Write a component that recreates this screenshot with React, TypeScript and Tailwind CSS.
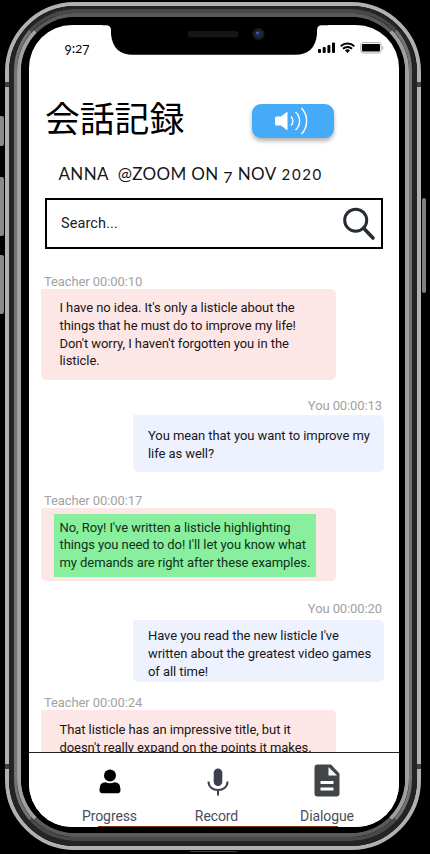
import type { ReactNode } from "react";

type Message = {
  who: "Teacher" | "You";
  time: string;
  lines: string[];
  block: string;
  label: string;
  bubble: string;
  highlight?: boolean;
};

const messages: Message[] = [
  {
    who: "Teacher",
    time: "00:00:10",
    lines: [
      "I have no idea. It's only a listicle about the",
      "things that he must do to improve my life!",
      "Don't worry, I haven't forgotten you in the",
      "listicle.",
    ],
    block: "mt-[25px]",
    label: "h-[15px] leading-[15px]",
    bubble: "h-[91px] pt-[10px]",
  },
  {
    who: "You",
    time: "00:00:13",
    lines: ["You mean that you want to improve my", "life as well?"],
    block: "mt-[18px]",
    label: "h-[17px] leading-[15px]",
    bubble: "h-[57px] pt-[12px]",
  },
  {
    who: "Teacher",
    time: "00:00:17",
    lines: [
      "No, Roy! I've written a listicle highlighting",
      "things you need to do! I'll let you know what",
      "my demands are right after these examples.",
    ],
    block: "mt-[21px]",
    label: "h-[15px] leading-[15px]",
    bubble: "h-[73px] pt-[6px]",
    highlight: true,
  },
  {
    who: "You",
    time: "00:00:20",
    lines: ["Have you read the new listicle I've", "written about the greatest video games", "of all time!"],
    block: "mt-[20px]",
    label: "h-[19px] leading-[16px]",
    bubble: "h-[62px] pt-[7px]",
  },
  {
    who: "Teacher",
    time: "00:00:24",
    lines: ["That listicle has an impressive title, but it", "doesn't really expand on the points it makes."],
    block: "mt-[13px]",
    label: "h-[15px] leading-[15px]",
    bubble: "h-[91px] pt-[11px]",
  },
];

function Bubble({ m }: { m: Message }) {
  const teacher = m.who === "Teacher";
  return (
    <div className={`flex shrink-0 flex-col ${teacher ? "w-[295px]" : "w-[251px] self-end"} ${m.block}`}>
      <div
        className={`text-[13px] tracking-[-0.1px] text-[#a2a2a2] ${teacher ? "pl-[3px]" : "pr-[2px] text-right"} ${m.label}`}
      >
        {m.who} {m.time}
      </div>
      <div
        className={`rounded-[5px] rounded-tl-none text-[13px] leading-[17.8px] tracking-[-0.07px] whitespace-nowrap ${
          teacher ? "bg-[#fde7e6] text-[#1b1516]" : "bg-[#edf2fe] pl-[15px] text-[#16181d]"
        } ${teacher && !m.highlight ? "pl-[18.5px]" : ""} ${m.bubble}`}
      >
        <div
          className={m.highlight ? "ml-[13px] h-[63px] w-[262px] bg-[#87ef9d] pt-[4.6px] pl-[5.5px] text-[#12301a]" : ""}
        >
          {m.lines.map((l) => (
            <div key={l}>{l}</div>
          ))}
        </div>
      </div>
    </div>
  );
}

function Tab({ icon, label, className }: { icon: ReactNode; label: string; className: string }) {
  return (
    <div className={`flex flex-col items-center ${className}`}>
      <div className="flex h-[48px] items-center justify-center">{icon}</div>
      <span className="text-[14px] leading-[20px] tracking-[-0.1px] text-[#4b4e59]">{label}</span>
    </div>
  );
}

function StatusBar() {
  return (
    <div className="flex h-[44px] shrink-0 items-start justify-between pt-[13px] pr-[15.5px] pl-[35.5px]">
      <span className="font-['Lato'] text-[14px] leading-[20px] text-black">
        <span className="inline-block translate-y-[2px] text-[12.5px]">9</span>:
        <span className="text-[12px]">2</span>
        <span className="inline-block translate-y-[2px] text-[12.5px]">7</span>
      </span>
      <svg width="66" height="12" viewBox="0 0 66 12" className="mt-[4px]">
        <g fill="#000">
          <rect x="0" y="7" width="3" height="4" rx="1" />
          <rect x="4.7" y="5" width="3" height="6" rx="1" />
          <rect x="9.4" y="3" width="3" height="8" rx="1" />
          <rect x="14" y="0.5" width="3" height="10.5" rx="1" />
          <path d="M29.5 11 27 8.5a3.7 3.7 0 0 1 5 0Z" />
        </g>
        <path d="M22.7 4.2a9.8 9.8 0 0 1 13.6 0M25 6.8a6.4 6.4 0 0 1 9 0" fill="none" stroke="#000" strokeWidth="1.9" />
        <rect x="42.8" y="0.6" width="20.4" height="10.4" rx="2.5" fill="none" stroke="#aaa" />
        <rect x="44" y="2" width="18" height="7.6" rx="1" fill="#000" />
        <path d="M64.5 4v4c1.3-.7 1.3-3.3 0-4Z" fill="#aaa" />
      </svg>
    </div>
  );
}

export default function App() {
  return (
    <div className="relative h-[854px] w-[430px] overflow-hidden bg-black pt-[2px] pl-[5px] font-['Roboto','Liberation_Sans',sans-serif]">
      <div className="absolute top-[116px] left-[-2px] h-[30px] w-[6px] rounded-[2px] bg-[#8a8a8a]" />
      <div className="absolute top-[177px] left-[-2px] h-[59px] w-[6px] rounded-[2px] bg-[#8a8a8a]" />
      <div className="absolute top-[255px] left-[-2px] h-[59px] w-[6px] rounded-[2px] bg-[#8a8a8a]" />
      <div className="absolute top-[198px] left-[422px] h-[95px] w-[4px] rounded-[2px] bg-[#808080]" />
      <div className="absolute top-[851px] left-[190px] h-px w-[47px] bg-[#444]" />

      <div className="h-[848px] w-[416px] rounded-[70px] border-x-[4px] border-y-[4px] border-[#b3b0b1]">
        <div className="h-full w-full rounded-[66px] border-x-[5px] border-t-[3px] border-b-[5px] border-[#242424]">
          <div className="h-full w-full rounded-[61px] border-x-[3px] border-t-[4px] border-b-[4px] border-x-[#737373] border-y-[#484848]">
            <div className="h-full w-full rounded-[58px] border-x-[4px] border-t-[4px] border-b-[4px] border-x-[#a0a0a0] border-y-[#5a5a5a]">
              <div className="flex h-full w-full rounded-[55px] bg-black pt-[8px] pr-[6px] pb-[7px] pl-[8px]">
                <div className="flex h-[802px] w-[370px] flex-col overflow-hidden rounded-[43px] bg-white">
                  <StatusBar />

                  <div className="flex h-[80px] shrink-0 items-start pl-[16px]">
                    <h1 className="mt-[22.5px] w-[206.5px] font-['Noto_Sans_CJK_JP',sans-serif] text-[34.8px] leading-[50px] font-normal whitespace-nowrap text-black">
                      会話記録
                    </h1>
                    <button className="mt-[35px] flex h-[34px] w-[82px] items-center justify-center rounded-[9px] bg-[#45aaf8] pr-px shadow-[0_3px_4px_rgba(0,0,0,0.3)]">
                      <svg width="36" height="28" viewBox="0 0 36 28">
                        <path d="M1 11q0-1.5 1.5-1.5H7L13.5 4.5v19L7 18.5H2.5Q1 18.5 1 17Z" fill="#fff" />
                        <path
                          d="M17 9.5a6.2 6.2 0 0 1 0 9M21.5 5a12 12 0 0 1 0 18M27.5 1a19 19 0 0 1 0 26"
                          fill="none"
                          stroke="#fff"
                          strokeWidth="1.4"
                        />
                      </svg>
                    </button>
                  </div>

                  <div className="h-[49px] shrink-0 pt-[12.5px] pl-[29.5px] font-['Lato'] text-[17px] leading-[24px] tracking-[0.35px] whitespace-pre text-[#161616]">
                    {"ANNA  @ZOOM ON "}
                    <span className="inline-block translate-y-[3px] text-[16px] leading-none">7</span>
                    {" NOV "}
                    <span className="ml-[1px] text-[15px] tracking-[1.6px]">2020</span>
                  </div>

                  <div className="mr-[16px] ml-[16px] flex h-[51px] shrink-0 items-center justify-between border-2 border-black pr-[5px] pl-[14px]">
                    <span className="text-[14.5px] tracking-[0.1px] text-[#202020]">Search...</span>
                    <svg width="34" height="34" viewBox="0 0 34 34" fill="none" stroke="#252c33">
                      <circle cx="13.7" cy="13.2" r="11" strokeWidth="3" />
                      <path d="m21.5 21 9.5 10" strokeWidth="3.6" strokeLinecap="round" />
                    </svg>
                  </div>

                  <div className="flex min-h-0 flex-1 flex-col overflow-hidden pr-[15px] pl-[12px]">
                    {messages.map((m) => (
                      <Bubble key={m.time} m={m} />
                    ))}
                  </div>

                  <nav className="flex h-[75px] shrink-0 border-t border-[#222] bg-white pt-[1px]">
                    <Tab
                      className="ml-[40px] w-[81px] pt-[4px]"
                      label="Progress"
                      icon={
                        <svg width="22" height="25" viewBox="0 0 22 25" className="-mt-[1px] ml-[1px]">
                          <circle cx="11" cy="6.5" r="6" fill="#000" />
                          <path
                            d="M.5 20.5Q.5 13.2 6.5 13.2q4.5 2 9 0 6 0 6 7.3 0 3.8-2.5 3.8H3Q.5 24.3.5 20.5Z"
                            fill="#000"
                          />
                        </svg>
                      }
                    />
                    <Tab
                      className="ml-[26px] w-[81px] pt-[4px]"
                      label="Record"
                      icon={
                        <svg width="22" height="28" viewBox="0 0 22 28" className="ml-[3px]">
                          <rect x="6.7" y="0.5" width="8.6" height="17.5" rx="4.3" fill="#3d404c" />
                          <path
                            d="M1.5 13.5c0 5.2 4 8.5 9.5 8.5s9.5-3.3 9.5-8.5M11 22v5.5"
                            fill="none"
                            stroke="#3d404c"
                            strokeWidth="2"
                          />
                        </svg>
                      }
                    />
                    <Tab
                      className="ml-[30px] w-[80px] pt-[4px]"
                      label="Dialogue"
                      icon={
                        <svg width="26" height="33" viewBox="0 0 26 33" className="-mt-[3px]">
                          <path
                            fillRule="evenodd"
                            d="M3.5.5H17L25.5 9.5V29.5Q25.5 32.5 22.5 32.5H3.5Q.5 32.5.5 29.5V3.5Q.5.5 3.5.5ZM14.5 3v8.500H23ZM6.5 17v3h13v-3ZM6.5 23.5v3h13v-3Z"
                            fill="#414547"
                          />
                        </svg>
                      }
                    />
                  </nav>
                </div>
              </div>
            </div>
          </div>
        </div>
      </div>

      {/* Notch with speaker and camera */}
      <svg className="absolute top-[17px] left-[100px]" width="230" height="40" viewBox="100 17 230 40">
        <path d="M102 17V25.2H106q5 0 5 5v4q2 20.5 22 20.5H295q20 0 22-20.5v-4q0-5 5-5h6V17Z" fill="#000" />
        <rect x="187.5" y="31" width="51" height="6.5" rx="3.2" fill="#161616" />
        <circle cx="258.5" cy="34" r="6" fill="#1b1c20" />
        <circle cx="258.5" cy="34" r="3.6" fill="#16294d" />
        <circle cx="257.5" cy="33" r="1.3" fill="#3c6cad" />
      </svg>

      {/* Antenna bands */}
      <div className="absolute top-[82px] left-[5px] h-[5px] w-[4px] bg-[#3f3f3f]" />
      <div className="absolute top-[82px] left-[417px] h-[5px] w-[4px] bg-[#3f3f3f]" />
      <div className="absolute top-[764px] left-[5px] h-[5px] w-[4px] bg-[#3f3f3f]" />
      <div className="absolute top-[764px] left-[417px] h-[5px] w-[4px] bg-[#3f3f3f]" />
      <div className="absolute top-[826px] left-[98px] h-px w-[240px] bg-[#7a3010]" />
    </div>
  );
}
